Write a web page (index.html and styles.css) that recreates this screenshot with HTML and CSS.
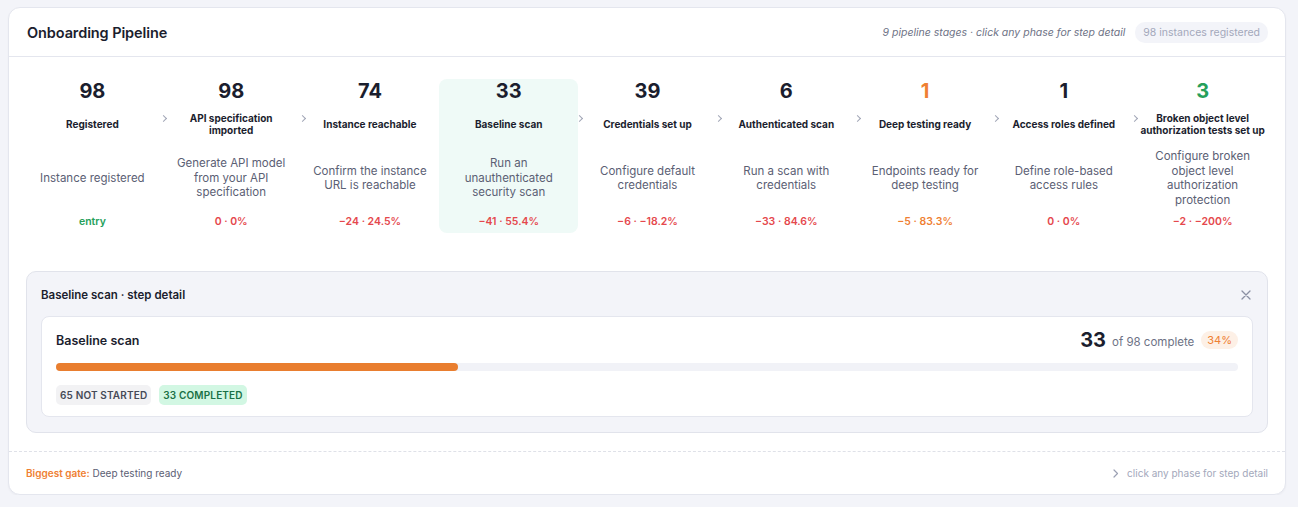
FILE: index.html
```html
<!DOCTYPE html>
<html lang="en">
<head>
  <meta charset="UTF-8">
  <meta name="viewport" content="width=device-width, initial-scale=1.0">
  <title>Onboarding Pipeline</title>
  <link rel="stylesheet" href="styles.css">
</head>
<body>
  <div class="card">
    <div class="card-head">
      <h1>Onboarding Pipeline</h1>
      <div class="head-right">
        <span class="hint">9 pipeline stages · click any phase for step detail</span>
        <span class="count-pill">98 instances registered</span>
      </div>
    </div>

    <div class="stages">
      <div class="stage">
        <div class="num">98</div>
        <div class="label">Registered</div>
        <div class="desc">Instance registered</div>
        <div class="delta good">entry</div>
        <span class="chev"></span>
      </div>
      <div class="stage">
        <div class="num">98</div>
        <div class="label">API specification imported</div>
        <div class="desc">Generate API model from your API specification</div>
        <div class="delta">0 · 0%</div>
        <span class="chev"></span>
      </div>
      <div class="stage">
        <div class="num">74</div>
        <div class="label">Instance reachable</div>
        <div class="desc">Confirm the instance URL is reachable</div>
        <div class="delta">−24 · 24.5%</div>
        <span class="chev"></span>
      </div>
      <div class="stage active">
        <div class="num">33</div>
        <div class="label">Baseline scan</div>
        <div class="desc">Run an<br>unauthenticated<br>security scan</div>
        <div class="delta">−41 · 55.4%</div>
        <span class="chev"></span>
      </div>
      <div class="stage">
        <div class="num">39</div>
        <div class="label">Credentials set up</div>
        <div class="desc">Configure default credentials</div>
        <div class="delta">−6 · −18.2%</div>
        <span class="chev"></span>
      </div>
      <div class="stage">
        <div class="num">6</div>
        <div class="label">Authenticated scan</div>
        <div class="desc">Run a scan with credentials</div>
        <div class="delta">−33 · 84.6%</div>
        <span class="chev"></span>
      </div>
      <div class="stage">
        <div class="num warn">1</div>
        <div class="label">Deep testing ready</div>
        <div class="desc">Endpoints ready for deep testing</div>
        <div class="delta warn">−5 · 83.3%</div>
        <span class="chev"></span>
      </div>
      <div class="stage">
        <div class="num">1</div>
        <div class="label">Access roles defined</div>
        <div class="desc">Define role-based access rules</div>
        <div class="delta">0 · 0%</div>
        <span class="chev"></span>
      </div>
      <div class="stage">
        <div class="num good">3</div>
        <div class="label">Broken object level authorization tests set up</div>
        <div class="desc">Configure broken<br>object level<br>authorization<br>protection</div>
        <div class="delta">−2 · −200%</div>
      </div>
    </div>

    <div class="detail">
      <div class="detail-head">
        <span>Baseline scan · step detail</span>
        <svg class="close" width="10" height="10" viewBox="0 0 10 10"><path d="M1 1L9 9M9 1L1 9" stroke="#8b90a3" stroke-width="1.3" stroke-linecap="round"/></svg>
      </div>
      <div class="detail-card">
        <div class="detail-row">
          <span class="step-name">Baseline scan</span>
          <div class="progress-sum">
            <span class="big">33</span>
            <span class="of">of 98 complete</span>
            <span class="pct">34%</span>
          </div>
        </div>
        <div class="bar"><div class="fill" style="width: 34%"></div></div>
        <div class="tags">
          <span class="tag grey">65 NOT STARTED</span>
          <span class="tag green">33 COMPLETED</span>
        </div>
      </div>
    </div>

    <div class="card-foot">
      <div><span class="gate">Biggest gate:</span> Deep testing ready</div>
      <div class="foot-hint">
        <svg width="6" height="9" viewBox="0 0 6 9"><path d="M1 1l3.5 3.5L1 8" fill="none" stroke="#9ba0b3" stroke-width="1.2" stroke-linecap="round" stroke-linejoin="round"/></svg>
        <span>click any phase for step detail</span>
      </div>
    </div>
  </div>
</body>
</html>
```

FILE: styles.css
```css
:root {
  --bg: #f3f4f9;
  --line: #e4e6ee;
  --ink: #1b1e2e;
  --muted: #5b6074;
  --faint: #a3a8bb;
  --red: #e5484d;
  --orange: #ef7f33;
  --green: #26a05a;
  --font: 'Inter', 'Noto Sans', sans-serif;
}
* {
  box-sizing: border-box;
}
body {
  margin: 0;
  padding: 7px 12px 0 8px;
  background: var(--bg);
  font-family: var(--font);
  color: var(--ink);
}
.card {
  background: #fff;
  border: 1px solid var(--line);
  border-radius: 12px;
  box-shadow: 0 1px 2px rgba(20, 25, 50, 0.04);
}
.card-head {
  height: 49px;
  display: flex;
  align-items: center;
  justify-content: space-between;
  padding: 0 17px 0 18px;
  border-bottom: 1px solid var(--line);
}
.card-head h1 {
  margin: 0;
  font-size: 14.5px;
  font-weight: 600;
  letter-spacing: -0.1px;
}
.head-right {
  display: flex;
  align-items: center;
  gap: 10px;
}
.hint {
  font-size: 10.5px;
  font-style: italic;
  color: #6d7285;
}
.count-pill {
  background: var(--bg);
  color: var(--faint);
  font-size: 10.5px;
  padding: 4px 8px;
  border-radius: 10px;
}
.stages {
  display: grid;
  grid-template-columns: repeat(9, 1fr);
  padding: 22px 13px 0 14px;
}
.stage {
  position: relative;
  height: 154px;
  display: flex;
  flex-direction: column;
  align-items: center;
  text-align: center;
  border-radius: 8px;
  padding: 0 6px;
  cursor: pointer;
}
.stage.active {
  background: #effaf7;
}
.num {
  font-size: 20px;
  font-weight: 700;
  line-height: 24px;
}
.num.warn { color: var(--orange); }
.num.good { color: var(--green); }
.label {
  margin-top: 5px;
  height: 32px;
  display: flex;
  align-items: center;
  font-size: 10px;
  font-weight: 700;
  line-height: 12.5px;
}
.desc {
  margin-top: 8px;
  height: 60px;
  display: flex;
  align-items: center;
  justify-content: center;
  font-size: 11.5px;
  line-height: 14.5px;
  color: var(--muted);
}
.delta {
  margin-top: 6px;
  font-size: 10.5px;
  font-weight: 600;
  line-height: 16px;
  color: var(--red);
}
.delta.good { color: var(--green); }
.delta.warn { color: var(--orange); }
.chev {
  position: absolute;
  right: -4px;
  top: 37px;
  width: 5px;
  height: 5px;
  border-top: 1.2px solid #a0a5b6;
  border-right: 1.2px solid #a0a5b6;
  transform: rotate(45deg);
}
.detail {
  margin: 38px 17px 0;
  background: var(--bg);
  border: 1px solid #e1e3eb;
  border-radius: 10px;
  padding: 0 14px 15px;
}
.detail-head {
  height: 44px;
  display: flex;
  align-items: center;
  justify-content: space-between;
  font-size: 11.5px;
  font-weight: 600;
  padding-top: 2px;
}
.close {
  margin-right: 2px;
}
.detail-card {
  background: #fff;
  border: 1px solid var(--line);
  border-radius: 8px;
  padding: 10px 14px 11px;
}
.detail-row {
  display: flex;
  align-items: center;
  justify-content: space-between;
  height: 26px;
}
.step-name {
  font-size: 12.5px;
  font-weight: 600;
}
.progress-sum {
  display: flex;
  align-items: center;
  gap: 6px;
}
.big {
  font-size: 20px;
  font-weight: 700;
}
.of {
  font-size: 11.5px;
  color: #6d7285;
  margin-top: 3px;
}
.pct {
  background: #fdf0e6;
  color: var(--orange);
  font-size: 11px;
  padding: 2px 6px;
  border-radius: 9px;
  margin-left: 1px;
}
.bar {
  margin-top: 10px;
  height: 8px;
  background: #f1f2f7;
  border-radius: 4px;
}
.fill {
  height: 100%;
  background: #e97e2f;
  border-radius: 4px;
}
.tags {
  display: flex;
  gap: 8px;
  margin-top: 14px;
}
.tag {
  font-size: 10px;
  font-weight: 600;
  letter-spacing: 0.15px;
  padding: 4px 4px;
  border-radius: 5px;
}
.tag.grey {
  background: #f2f2f4;
  color: #464a57;
}
.tag.green {
  background: #d2f7e3;
  color: #1a7146;
}
.card-foot {
  margin-top: 18px;
  height: 43px;
  border-top: 1px dashed #dfe1e8;
  display: flex;
  align-items: center;
  justify-content: space-between;
  padding: 0 17px 0 17px;
  font-size: 10px;
  color: var(--muted);
}
.gate {
  color: var(--orange);
  font-weight: 600;
}
.foot-hint {
  display: flex;
  align-items: center;
  gap: 8px;
  color: var(--faint);
}
```
